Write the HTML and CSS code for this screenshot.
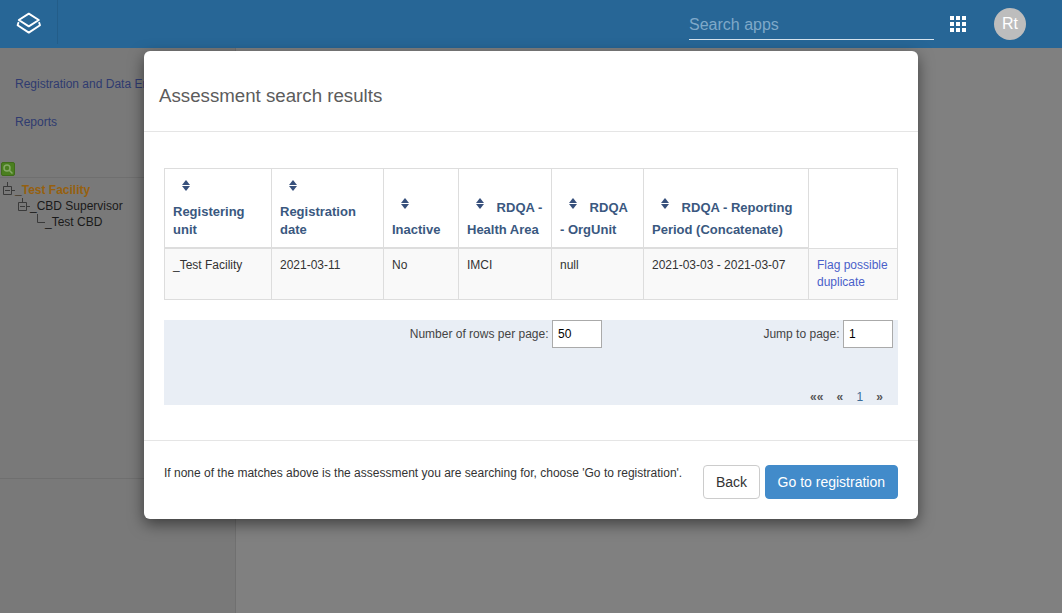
FILE: index.html
```html
<!DOCTYPE html>
<html lang="en">

<head>
    <meta charset="UTF-8">
    <title>Assessment search results</title>
    <link rel="stylesheet" href="styles.css">
</head>

<body>
    <header class="topbar">
        <div class="logo">
            <svg width="26" height="24" viewBox="0 0 26 24" fill="none" stroke="#fff" stroke-width="1.9" stroke-linejoin="round" stroke-linecap="round">
                <path d="M12.800 2.600 L22.800 9 L12.800 15.400 L2.800 9 Z"></path>
                <path d="M2.400 11.800 L1.600 14.200 L12.800 21.600 L24 14.200 L23.200 11.800"></path>
            </svg>
        </div>
        <div class="topbar-right">
            <div class="app-search">Search apps</div>
            <div class="apps-grid">
                <i></i><i></i><i></i><i></i><i></i><i></i><i></i><i></i><i></i>
            </div>
            <div class="avatar">Rt</div>
        </div>
    </header>

    <div class="page">
        <aside class="sidebar">
            <nav class="side-links">
                <a>Registration and Data Entry</a>
                <a>Reports</a>
            </nav>
            <div class="tree-tools">
                <span class="tree-search">
                    <svg width="10" height="10" viewBox="0 0 10 10" fill="none" stroke="#84a866" stroke-width="1.5">
                        <circle cx="4" cy="4" r="3"></circle>
                        <path d="M6.2 6.2 L9.5 9.5"></path>
                    </svg>
                </span>
            </div>
            <div class="tree">
                <div class="tree-row">
                    <svg class="tree-icon" width="15" height="16" viewBox="0 0 15 16" fill="none" stroke="#3a3a3a">
                        <path d="M7.5 0 V4 M3.5 4.500 H11.500 V12.500 H3.500 Z M5 8.500 H10 M11.500 8.500 H15"></path>
                    </svg>
                    <span class="tree-root"><span class="tree-mark">_</span>Test Facility</span>
                </div>
                <div class="tree-row level-1">
                    <svg class="tree-icon" width="15" height="16" viewBox="0 0 15 16" fill="none" stroke="#3a3a3a">
                        <path d="M7.5 0 V4 M3.5 4.500 H11.500 V12.500 H3.500 Z M5 8.500 H10 M11.500 8.500 H15"></path>
                    </svg>
                    <span>_CBD Supervisor</span>
                </div>
                <div class="tree-row level-2">
                    <svg class="tree-icon" width="15" height="16" viewBox="0 0 15 16" fill="none" stroke="#3a3a3a">
                        <path d="M7.500 0 V8.500 H15"></path>
                    </svg>
                    <span>_Test CBD</span>
                </div>
            </div>
            <div class="side-rest"></div>
        </aside>
        <main class="content"></main>
    </div>

    <div class="modal">
        <div class="modal-header">
            <h4>Assessment search results</h4>
        </div>
        <div class="modal-body">
            <table class="results">
                <thead>
                    <tr>
                        <th class="col-unit sorted"><span class="sort"></span> Registering unit</th>
                        <th class="col-date sorted"><span class="sort"></span> Registration date</th>
                        <th class="col-inactive sorted"><span class="sort"></span> Inactive</th>
                        <th class="col-area sorted"><span class="sort"></span> RDQA - Health Area</th>
                        <th class="col-org sorted"><span class="sort"></span> RDQA - OrgUnit</th>
                        <th class="col-period sorted"><span class="sort"></span> RDQA - Reporting Period (Concatenate)</th>
                        <th class="col-flag"></th>
                    </tr>
                </thead>
                <tbody>
                    <tr>
                        <td>_Test Facility</td>
                        <td>2021-03-11</td>
                        <td>No</td>
                        <td>IMCI</td>
                        <td>null</td>
                        <td>2021-03-03 - 2021-03-07</td>
                        <td><a class="flag-link">Flag possible duplicate</a></td>
                    </tr>
                </tbody>
            </table>

            <div class="pager">
                <div class="pager-top">
                    <label class="pager-field">Number of rows per page: <input type="text" value="50"></label>
                    <label class="pager-field">Jump to page: <input type="text" value="1"></label>
                </div>
                <div class="pager-links">
                    <span>««</span>
                    <span>«</span>
                    <span class="current">1</span>
                    <span>»</span>
                </div>
            </div>
        </div>
        <div class="modal-footer">
            <p>If none of the matches above is the assessment you are searching for, choose 'Go to registration'.</p>
            <div class="buttons">
                <button class="btn btn-back">Back</button>
                <button class="btn btn-primary">Go to registration</button>
            </div>
        </div>
    </div>
</body>

</html>
```

FILE: styles.css
```css
* {
    box-sizing: border-box;
}

html,
body {
    height: 100%;
}

body {
    margin: 0;
    overflow: hidden;
    background-color: #808080;
    color: #333;
    font-family: "Liberation Sans", Arial, sans-serif;
    font-size: 12px;
}

.topbar {
    display: flex;
    align-items: flex-start;
    justify-content: space-between;
    height: 48px;
    background-color: #276696;
}

.logo {
    display: flex;
    justify-content: center;
    width: 58px;
    height: 44px;
    padding-top: 11px;
    border-right: 1px solid #235d89;
}

.topbar-right {
    display: flex;
    align-items: flex-start;
    padding-right: 36px;
}

.app-search {
    width: 245px;
    height: 32px;
    margin-top: 8px;
    padding-top: 7px;
    border-bottom: 1px solid #d5e3ee;
    color: #7fa9c9;
    font-size: 16px;
    line-height: 19px;
}

.apps-grid {
    display: grid;
    grid-template-columns: repeat(3, 4px);
    gap: 2px;
    margin: 16px 0 0 16px;
}

.apps-grid i {
    height: 4px;
    background-color: #fff;
}

.avatar {
    width: 32px;
    height: 32px;
    margin: 8px 0 0 28px;
    border-radius: 50%;
    background-color: #bdbdbd;
    color: #fff;
    font-size: 16px;
    line-height: 31px;
    text-align: center;
}

.page {
    display: flex;
    height: calc(100% - 48px);
}

.sidebar {
    display: flex;
    flex-direction: column;
    width: 236px;
    border-right: 1px solid #707070;
    background-color: #797979;
}

.side-links {
    display: flex;
    flex-direction: column;
    gap: 21px;
    height: 114px;
    padding: 28px 0 0 15px;
}

.side-links a {
    color: #2f3b70;
    line-height: 17px;
}

.tree-tools {
    height: 16px;
    padding-left: 1px;
    border-bottom: 1px solid #6f6f6f;
}

.tree-search {
    display: flex;
    align-items: center;
    justify-content: center;
    width: 14px;
    height: 14px;
    border: 1px solid #3f6c1a;
    border-radius: 2px;
    background-color: #4a7f1f;
}

.tree {
    height: 301px;
    padding: 4px 0 0 0;
    border-bottom: 1px solid #6f6f6f;
}

.tree-row {
    display: flex;
    height: 16px;
    color: #1a1a1a;
    line-height: 16px;
}

.tree-icon {
    flex: none;
}

.level-1 {
    padding-left: 15px;
}

.level-2 {
    padding-left: 30px;
}

.tree-root {
    color: #96600f;
    font-weight: bold;
}

.tree-mark {
    color: #2a1a04;
}

.side-rest {
    flex: 1;
}

.content {
    flex: 1;
}

/* dialog sits over the dimmed page */
.modal {
    position: absolute;
    top: 51px;
    left: 144px;
    width: 774px;
    border-radius: 6px;
    background-color: #fff;
    box-shadow: 0 5px 15px rgba(0, 0, 0, .5);
}

.modal-header {
    height: 81px;
    padding: 35px 15px 0;
    border-bottom: 1px solid #e5e5e5;
}

.modal-header h4 {
    margin: 0;
    color: #5c5c5c;
    font-size: 18.7px;
    font-weight: normal;
    line-height: 20px;
}

.modal-body {
    height: 308px;
    padding: 36px 20px 0;
}

.results {
    width: 733px;
    border-collapse: collapse;
    table-layout: fixed;
}

.results th,
.results td {
    padding: 8px;
    border: 1px solid #ddd;
    text-align: left;
}

.results th {
    padding-top: 11px;
    color: #3a5880;
    font-size: 13px;
    line-height: 18px;
    vertical-align: bottom;
}

.results th.sorted {
    border-bottom-width: 2px;
}

.results td {
    background-color: #f9f9f9;
    line-height: 17px;
    vertical-align: top;
}

.col-unit {
    width: 107px;
}

.col-date {
    width: 112px;
}

.col-inactive {
    width: 75px;
}

.col-area {
    width: 93px;
}

.col-org {
    width: 92px;
}

.col-period {
    width: 165px;
}

.col-flag {
    width: 89px;
}

/* sort arrows */
.sort {
    display: inline-block;
    position: relative;
    width: 8px;
    height: 11px;
    margin: 0 9px 12px 9px;
    vertical-align: -9px;
}

.sort::before,
.sort::after {
    content: "";
    position: absolute;
    left: 0;
    border-left: 4px solid transparent;
    border-right: 4px solid transparent;
}

.sort::before {
    top: 0;
    border-bottom: 5px solid #37507c;
}

.sort::after {
    bottom: 0;
    border-top: 5px solid #37507c;
}

.flag-link {
    color: #4a5fc9;
}

.pager {
    display: flex;
    flex-direction: column;
    justify-content: space-between;
    height: 85px;
    margin-top: 20px;
    padding-right: 5px;
    background-color: #e9eef5;
}

.pager-top {
    display: grid;
    grid-template-columns: 438px 1fr;
}

.pager-field {
    display: flex;
    align-items: center;
    justify-content: flex-end;
    gap: 3.5px;
    height: 28px;
    color: #444;
}

.pager-field input {
    width: 50px;
    height: 28px;
    padding: 0 5px;
    border: 1px solid #aaa;
    background-color: #fff;
    color: #000;
    font-family: inherit;
    font-size: 12px;
}

.pager-links {
    display: flex;
    justify-content: flex-end;
    gap: 13.2px;
    padding: 0 10px 1px 0;
    color: #555;
    font-size: 12px;
    font-weight: bold;
    line-height: 14px;
}

.pager-links .current {
    color: #3d6a96;
    font-weight: normal;
}

.modal-footer {
    display: flex;
    justify-content: space-between;
    height: 79px;
    padding: 24px 20px 0;
    border-top: 1px solid #e5e5e5;
}

.modal-footer p {
    margin: 0;
    line-height: 17px;
}

.buttons {
    display: flex;
    flex: none;
    gap: 5px;
    height: 34px;
}

.btn {
    padding: 6px 12px;
    border: 1px solid #ccc;
    border-radius: 4px;
    background-color: #fff;
    color: #333;
    font-family: inherit;
    font-size: 14px;
    line-height: 20px;
}

.btn-back {
    padding: 6px 11.5px;
}

.btn-primary {
    border-color: #428bca;
    background-color: #428bca;
    color: #fff;
}
```
